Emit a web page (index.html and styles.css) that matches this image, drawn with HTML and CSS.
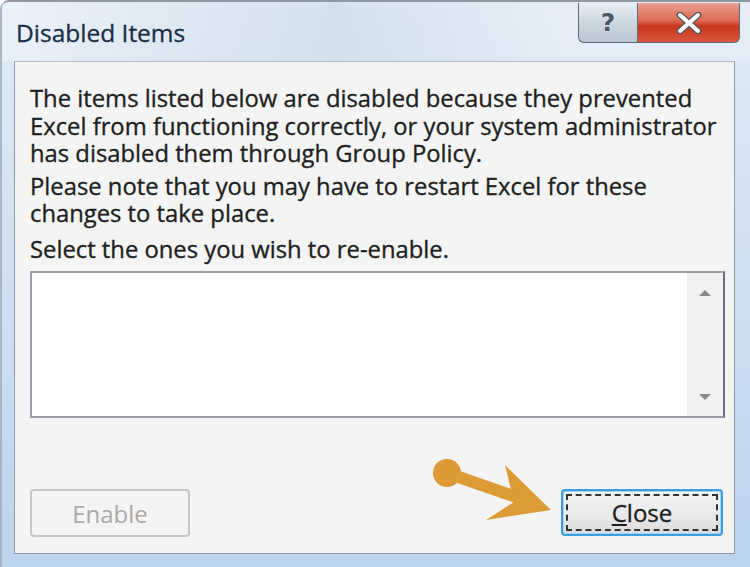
FILE: index.html
```html
<!DOCTYPE html>
<html lang="en">
<head>
    <meta charset="UTF-8">
    <title>Disabled Items</title>
    <link rel="stylesheet" href="styles.css">
</head>
<body>
    <div class="window">
        <div class="titlebar">
            <div class="title">Disabled Items</div>
            <div class="controls">
                <div class="ctrl help">?</div>
                <div class="ctrl close-x">
                    <svg width="26" height="22" viewBox="0 0 26 22">
                        <path d="M4 3 L22 19 M22 3 L4 19" stroke="#5a5a5a" stroke-width="7" stroke-linecap="round"/>
                        <path d="M4 3 L22 19 M22 3 L4 19" stroke="#ffffff" stroke-width="4" stroke-linecap="round"/>
                    </svg>
                </div>
            </div>
        </div>

        <div class="panel">
            <p class="msg first">The items listed below are disabled because they prevented Excel from functioning correctly, or your system administrator has disabled them through Group Policy.</p>
            <p class="msg">Please note that you may have to restart Excel for these changes to take place.</p>
            <p class="msg">Select the ones you wish to re-enable.</p>

            <div class="listbox">
                <div class="list-items"></div>
                <div class="scrollbar">
                    <span class="arrow up"></span>
                    <span class="arrow down"></span>
                </div>
            </div>

            <div class="buttons">
                <button class="btn disabled">Enable</button>
                <button class="btn default"><span class="focus"><u>C</u>lose</span></button>
            </div>
        </div>

        <!-- callout arrow pointing at the Close button -->
        <svg class="callout" width="140" height="80" viewBox="0 0 140 80">
            <circle cx="17" cy="23" r="14" fill="#dc9b34"/>
            <path d="M17 23 L86 47" stroke="#dc9b34" stroke-width="12"/>
            <path d="M75 15 L121 60 L56 70 L84 52 Z" fill="#dc9b34"/>
        </svg>
    </div>
</body>
</html>
```

FILE: styles.css
```css
* {
    margin: 0;
    padding: 0;
    box-sizing: border-box;
}

body {
    font-family: 'Open Sans', 'Noto Sans', sans-serif;
    background: #ffffff;
}

.window {
    position: relative;
    width: 750px;
    height: 567px;
    display: flex;
    flex-direction: column;
    background: linear-gradient(180deg, #dfeaf6 0%, #d2e2f3 40%, #bcd4ee 100%);
    border-top: 2px solid #8f99a4;
    border-left: 2px solid #a9b6c4;
    border-top-left-radius: 9px;
}

.titlebar {
    height: 59px;
    display: flex;
    justify-content: space-between;
    align-items: flex-start;
    background: linear-gradient(90deg, rgba(255,255,255,0.35) 0%, rgba(200,216,232,0.5) 45%, rgba(255,255,255,0.2) 75%);
}

.title {
    margin: 14px 0 0 14px;
    font-size: 24.5px;
    color: #1b2d45;
    -webkit-text-stroke: 0.3px #1b2d45;
}

.controls {
    display: flex;
    margin: 1px 10px 0 0;
}

.ctrl {
    height: 40px;
    display: flex;
    align-items: center;
    justify-content: center;
    border: 1px solid #5d6a78;
    border-top: none;
}

.help {
    width: 59px;
    border-right: none;
    border-bottom-left-radius: 6px;
    background: linear-gradient(180deg, #e8eef4 0%, #cdd7e1 50%, #b9c6d3 100%);
    color: #4a5868;
    font-size: 25px;
    font-weight: 700;
    font-family: 'DejaVu Sans', sans-serif;
    text-shadow: 0 0 1px #ffffff;
}

.close-x {
    width: 103px;
    border-bottom-right-radius: 6px;
    background: linear-gradient(180deg, #e9a193 0%, #dd6a55 45%, #c9341c 60%, #da5840 100%);
}

.panel {
    flex: 1;
    margin: 0 15px 13px 12px;
    padding: 23px 9px 0 15px;
    background: #f4f4f4;
    border: 1px solid #8e99a6;
    border-top-color: #b0bcc8;
}

.msg {
    font-size: 23.8px;
    line-height: 27.5px;
    color: #1f1f1f;
    -webkit-text-stroke: 0.35px #1f1f1f;
    margin-bottom: 8px;
}

.msg.first {
    margin-bottom: 5px;
}

.listbox {
    height: 147px;
    margin-top: 8px;
    display: flex;
    background: #ffffff;
    border: 2px solid #9a9da6;
    border-right-color: #6e7280;
}

.list-items {
    flex: 1;
}

.scrollbar {
    width: 36px;
    display: flex;
    flex-direction: column;
    justify-content: space-between;
    align-items: center;
    padding: 17px 0 16px;
    background: #f1f1f1;
}

.arrow {
    width: 0;
    height: 0;
    border-left: 6px solid transparent;
    border-right: 6px solid transparent;
}

.arrow.up {
    border-bottom: 6px solid #8a8a8a;
}

.arrow.down {
    border-top: 6px solid #8a8a8a;
}

.buttons {
    display: flex;
    justify-content: space-between;
    align-items: flex-start;
    margin-top: 71px;
    padding-right: 2px;
}

.btn {
    width: 160px;
    height: 48px;
    font-family: 'Open Sans', 'Noto Sans', sans-serif;
    font-size: 24px;
    border-radius: 4px;
    background: #f4f4f4;
}

.btn.disabled {
    color: #a9a9a9;
    border: 2px solid #c4c6ca;
}

.btn.default {
    width: 162px;
    height: 47px;
    padding: 3px;
    color: #1f1f1f;
    -webkit-text-stroke: 0.35px #1f1f1f;
    border: 2px solid #3b9fdf;
    box-shadow: inset 0 0 0 1px #9fd4f4;
    background: linear-gradient(180deg, #f2f2f2 0%, #ebebeb 50%, #dcdcdc 100%);
}

.focus {
    display: flex;
    height: 100%;
    align-items: center;
    justify-content: center;
    border: 2px dashed #333333;
}

.callout {
    position: absolute;
    left: 428px;
    top: 448px;
}
```
